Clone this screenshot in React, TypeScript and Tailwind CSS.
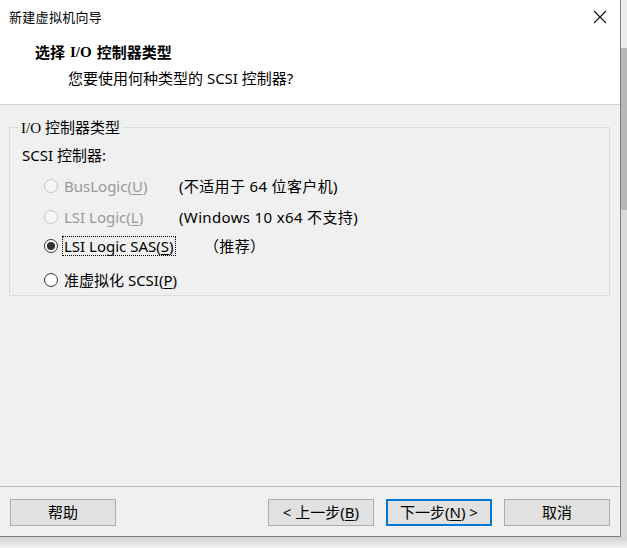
import React from 'react'

const font = {fontFamily: '"Noto Sans", "Noto Sans CJK SC", sans-serif'}

type Opt = {
  label: string
  key: string
  desc?: string
  disabled?: boolean
  checked?: boolean
  focused?: boolean
  descClass?: string
  rowClass: string
}

const options: Opt[] = [
  {label: 'BusLogic(', key: 'U', desc: '(不适用于 64 位客户机)', disabled: true, rowClass: 'mt-[11px]'},
  {label: 'LSI Logic(', key: 'L', desc: '(Windows 10 x64 不支持)', disabled: true, rowClass: 'mt-[11px]'},
  {label: 'LSI Logic SAS(', key: 'S', desc: '（推荐）', checked: true, focused: true, descClass: 'ml-[25px]', rowClass: 'mt-[9px]'},
  {label: '准虚拟化 SCSI(', key: 'P', rowClass: 'mt-[14px]'},
]

function Radio({checked, disabled}: {checked?: boolean; disabled?: boolean}) {
  return (
    <div
      className={
        'w-[14px] h-[14px] rounded-full border flex items-center justify-center shrink-0 ' +
        (disabled ? 'border-[#c4c4c4] bg-[#f6f6f6]' : 'border-[#333333] bg-white')
      }
    >
      {checked && <div className="w-[8px] h-[8px] rounded-full bg-[#333333]" />}
    </div>
  )
}

function Button({children, primary}: {children: React.ReactNode; primary?: boolean}) {
  return (
    <div
      className={
        'w-[106px] h-[27px] flex items-center justify-center bg-[#e1e1e1] text-[15px] text-black ' +
        (primary ? 'border-2 border-[#0078d7]' : 'border border-[#adadad]')
      }
    >
      {children}
    </div>
  )
}

export default function App() {
  return (
    <div className="w-[627px] h-[548px] overflow-hidden flex flex-col bg-[#f4f4f4]" style={font}>
      <div className="flex h-[537px]">
        {/* Dialog window */}
        <div className="w-[621px] h-[537px] flex flex-col border-r border-b border-[#7f7f7f] bg-[#f0f0f0]">
          {/* Header */}
          <div className="h-[105px] bg-white border-b border-[#cfcfcf] flex flex-col">
            <div className="h-[34px] flex items-center justify-between pl-[9px] pr-[13px]">
              <span className="text-[13px] text-black leading-none tracking-[0.3px]">新建虚拟机向导</span>
              <svg width="14" height="14" viewBox="0 0 14 14">
                <path d="M1 1 L13 13 M13 1 L1 13" stroke="#111" strokeWidth="1.1" fill="none" />
              </svg>
            </div>
            <div className="mt-[8px] ml-[35px] h-[20px] flex items-center text-[15px] font-bold text-black">
              选择 <span className="mx-[5px]" style={{fontFamily: '"Liberation Serif", serif'}}>I/O</span> 控制器类型
            </div>
            <div className="mt-[6px] ml-[68px] h-[20px] flex items-center text-[15px] text-black">
              您要使用何种类型的 SCSI 控制器?
            </div>
          </div>

          {/* Body */}
          <div className="flex-1 flex flex-col">
            <fieldset className="mt-[12px] ml-[9px] w-[601px] border border-[#dcdcdc] pb-[5px]">
              <legend className="ml-[9px] px-[2px] h-[20px] leading-[20px] text-[15px] text-black">
                <span style={{fontFamily: '"Liberation Serif", serif'}}>I/O</span> 控制器类型
              </legend>
              <div className="pl-[12px] mt-[8px] h-[20px] flex items-center text-[15px] text-black">
                SCSI 控制器:
              </div>
              {options.map((o) => (
                <div key={o.key} className={'pl-[34px] h-[20px] flex items-center ' + o.rowClass}>
                  <Radio checked={o.checked} disabled={o.disabled} />
                  <div className="w-[117px] ml-[4px] flex items-center shrink-0">
                    <span
                      className={
                        'text-[15px] leading-[18px] px-[1px] whitespace-nowrap ' +
                        (o.disabled ? 'text-[#9a9a9a] ' : 'text-black ') +
                        (o.focused ? 'border border-dotted border-black' : 'border border-transparent')
                      }
                    >
                      {o.label}
                      <span className="underline underline-offset-2">{o.key}</span>)
                    </span>
                  </div>
                  {o.desc && (
                    <span className={'text-[15px] text-black whitespace-nowrap tracking-[0.35px] ' + (o.descClass || '')}>
                      {o.desc}
                    </span>
                  )}
                </div>
              ))}
            </fieldset>

            <div className="flex-1" />

            <div className="h-px bg-[#b9b9b9]" />
            <div className="mt-[12px] mb-[10px] pl-[10px] pr-[10px] flex items-center">
              <Button>帮助</Button>
              <div className="flex-1" />
              <div className="flex gap-[12px]">
                <Button>
                  &lt; 上一步(<span className="underline underline-offset-2">B</span>)
                </Button>
                <Button primary>
                  下一步(<span className="underline underline-offset-2">N</span>) &gt;
                </Button>
                <Button>取消</Button>
              </div>
            </div>
          </div>
        </div>

        {/* Background app peeking at the right */}
        <div className="flex-1 flex flex-col">
          <div className="h-[48px] bg-[#ececec]" />
          <div className="h-[162px] bg-[#b8b8b8]" />
          <div className="flex-1 bg-[#dadada]" />
        </div>
      </div>

      {/* Window shadow */}
      <div className="flex-1 bg-gradient-to-b from-[#d2d2d2] to-[#f4f4f4]" />
    </div>
  )
}
